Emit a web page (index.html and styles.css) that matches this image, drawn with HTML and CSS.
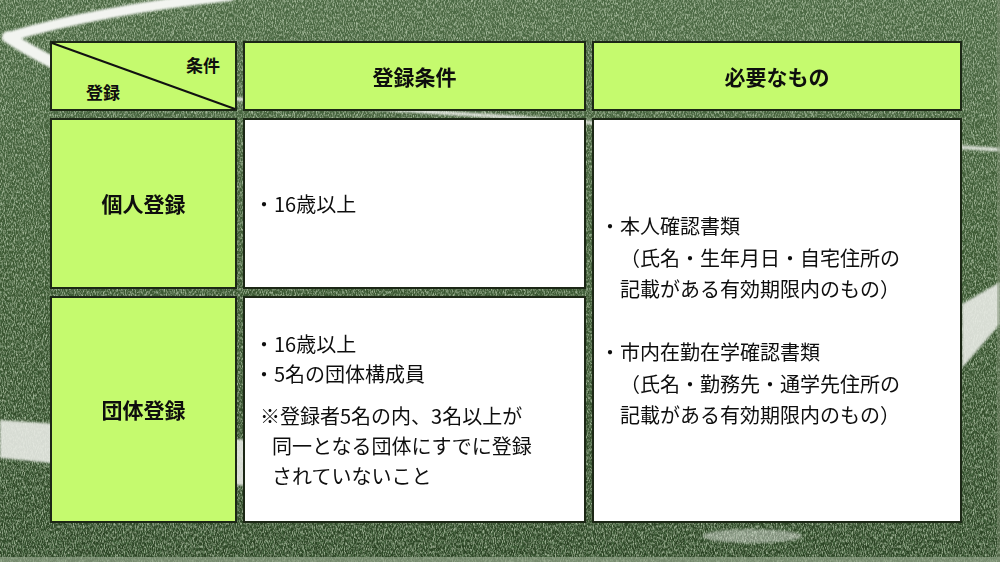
FILE: index.html
```html
<!DOCTYPE html>
<html lang="ja">
<head>
<meta charset="utf-8">
<title>登録条件</title>
<link rel="stylesheet" href="styles.css">
</head>
<body>
<div class="slide">
  <svg class="field" width="1000" height="562" viewBox="0 0 1000 562" aria-hidden="true">
    <defs>
      <linearGradient id="grass" x1="0" y1="0" x2="0" y2="1">
        <stop offset="0" stop-color="#506c47"/>
        <stop offset="0.45" stop-color="#3c5832"/>
        <stop offset="1" stop-color="#2a4223"/>
      </linearGradient>
      <filter id="noise" x="0" y="0" width="100%" height="100%">
        <feTurbulence type="fractalNoise" baseFrequency="1.1 0.35" numOctaves="3" seed="7"/>
        <feColorMatrix values="0 0 0 0 0.74  0 0 0 0 0.86  0 0 0 0 0.66  2.6 0 0 0 -1.05"/>
      </filter>
      <filter id="dark" x="0" y="0" width="100%" height="100%">
        <feTurbulence type="fractalNoise" baseFrequency="0.6 0.22" numOctaves="3" seed="3"/>
        <feColorMatrix values="0 0 0 0 0.06  0 0 0 0 0.13  0 0 0 0 0.05  0 2.4 0 0 -0.95"/>
      </filter>
      <filter id="soft"><feGaussianBlur stdDeviation="1"/></filter>
    </defs>
    <rect width="1000" height="562" fill="url(#grass)"/>
    <rect width="1000" height="562" filter="url(#dark)"/>
    <rect width="1000" height="562" filter="url(#noise)" opacity="0.6"/>
    <g fill="none" stroke="#f2f4f0" stroke-linecap="round" filter="url(#soft)">
      <path d="M 230 -4 Q 100 10 8 37" stroke-width="10"/>
      <path d="M 8 37 Q 28 50 56 64" stroke-width="12"/>
      <path d="M 160 94 L 1004 150" stroke-width="4" opacity="0.8"/>
    </g>
    <g fill="#e9ebe6" filter="url(#soft)">
      <polygon points="0,420 60,424 246,440 246,486 60,464 0,458" opacity="0.9"/>
      <polygon points="1000,282 962,304 962,368 1000,324" opacity="0.9"/>
      <ellipse cx="752" cy="536" rx="50" ry="7" opacity="0.45"/>
    </g>
    <rect x="0" y="557" width="1000" height="5" fill="#93a58a" opacity="0.7"/>
    <rect x="997" y="0" width="3" height="562" fill="#7f9174" opacity="0.45"/>
  </svg>

  <div class="table">
    <div class="cell head corner">
      <svg class="diag" viewBox="0 0 100 100" preserveAspectRatio="none" aria-hidden="true">
        <line x1="0" y1="0" x2="100" y2="100" vector-effect="non-scaling-stroke"/>
      </svg>
      <span class="corner-top">条件</span>
      <span class="corner-bottom">登録</span>
    </div>
    <div class="cell head">登録条件</div>
    <div class="cell head">必要なもの</div>

    <div class="cell head label">個人登録</div>
    <div class="cell body cond">
      <p class="item">・16歳以上</p>
    </div>
    <div class="cell body needs">
      <p class="item">・本人確認書類<br>（氏名・生年月日・自宅住所の<br>記載がある有効期限内のもの）</p>
      <p class="item">・市内在勤在学確認書類<br>（氏名・勤務先・通学先住所の<br>記載がある有効期限内のもの）</p>
    </div>

    <div class="cell head label">団体登録</div>
    <div class="cell body cond">
      <p class="item">・16歳以上</p>
      <p class="item">・5名の団体構成員</p>
      <p class="note">※登録者5名の内、3名以上が<br>同一となる団体にすでに登録<br>されていないこと</p>
    </div>
  </div>
</div>
</body>
</html>
```

FILE: styles.css
```css
* {
  box-sizing: border-box;
}

html, body {
  margin: 0;
  padding: 0;
}

body {
  font-family: "Noto Sans CJK JP", "Noto Sans", sans-serif;
  color: #0e0e0e;
  background: #2f4727;
}

.slide {
  position: relative;
  width: 1000px;
  height: 562px;
  overflow: hidden;
  padding: 41px 0 0 50px;
}

.field {
  position: absolute;
  left: 0;
  top: 0;
  display: block;
}

.table {
  position: relative;
  display: grid;
  grid-template-columns: 187px 343px 370px;
  grid-template-rows: 70px 171px 227px;
  column-gap: 6px;
  row-gap: 7px;
}

.cell {
  border: 2px solid #1c2716;
}

.head {
  background: #c5fa6e;
  display: flex;
  align-items: center;
  justify-content: center;
  font-weight: 700;
  font-size: 21px;
  line-height: 1;
}

.corner {
  position: relative;
  flex-direction: column;
  align-items: stretch;
  justify-content: flex-start;
  padding: 13px 15px 0 34px;
  gap: 10px;
  font-size: 17px;
}

.corner-top {
  align-self: flex-end;
  line-height: 17px;
}

.corner-bottom {
  align-self: flex-start;
  line-height: 17px;
}

.diag {
  position: absolute;
  left: 0;
  top: 0;
  width: 100%;
  height: 100%;
  overflow: visible;
}

.diag line {
  stroke: #111;
  stroke-width: 2;
}

.body {
  background: #ffffff;
  display: flex;
  flex-direction: column;
  justify-content: center;
  font-size: 20px;
  white-space: nowrap;
}

.item,
.note {
  margin: 0;
}

.cond {
  padding-left: 9px;
  line-height: 30px;
}

.note {
  margin-top: 12px;
  padding-left: 18px;
  text-indent: -12px;
}

.needs {
  grid-column: 3;
  grid-row: 2 / span 2;
  padding-left: 6px;
  line-height: 31.5px;
}

.needs .item {
  padding-left: 20px;
  text-indent: -20px;
}

.needs .item + .item {
  margin-top: 31.5px;
}
```
